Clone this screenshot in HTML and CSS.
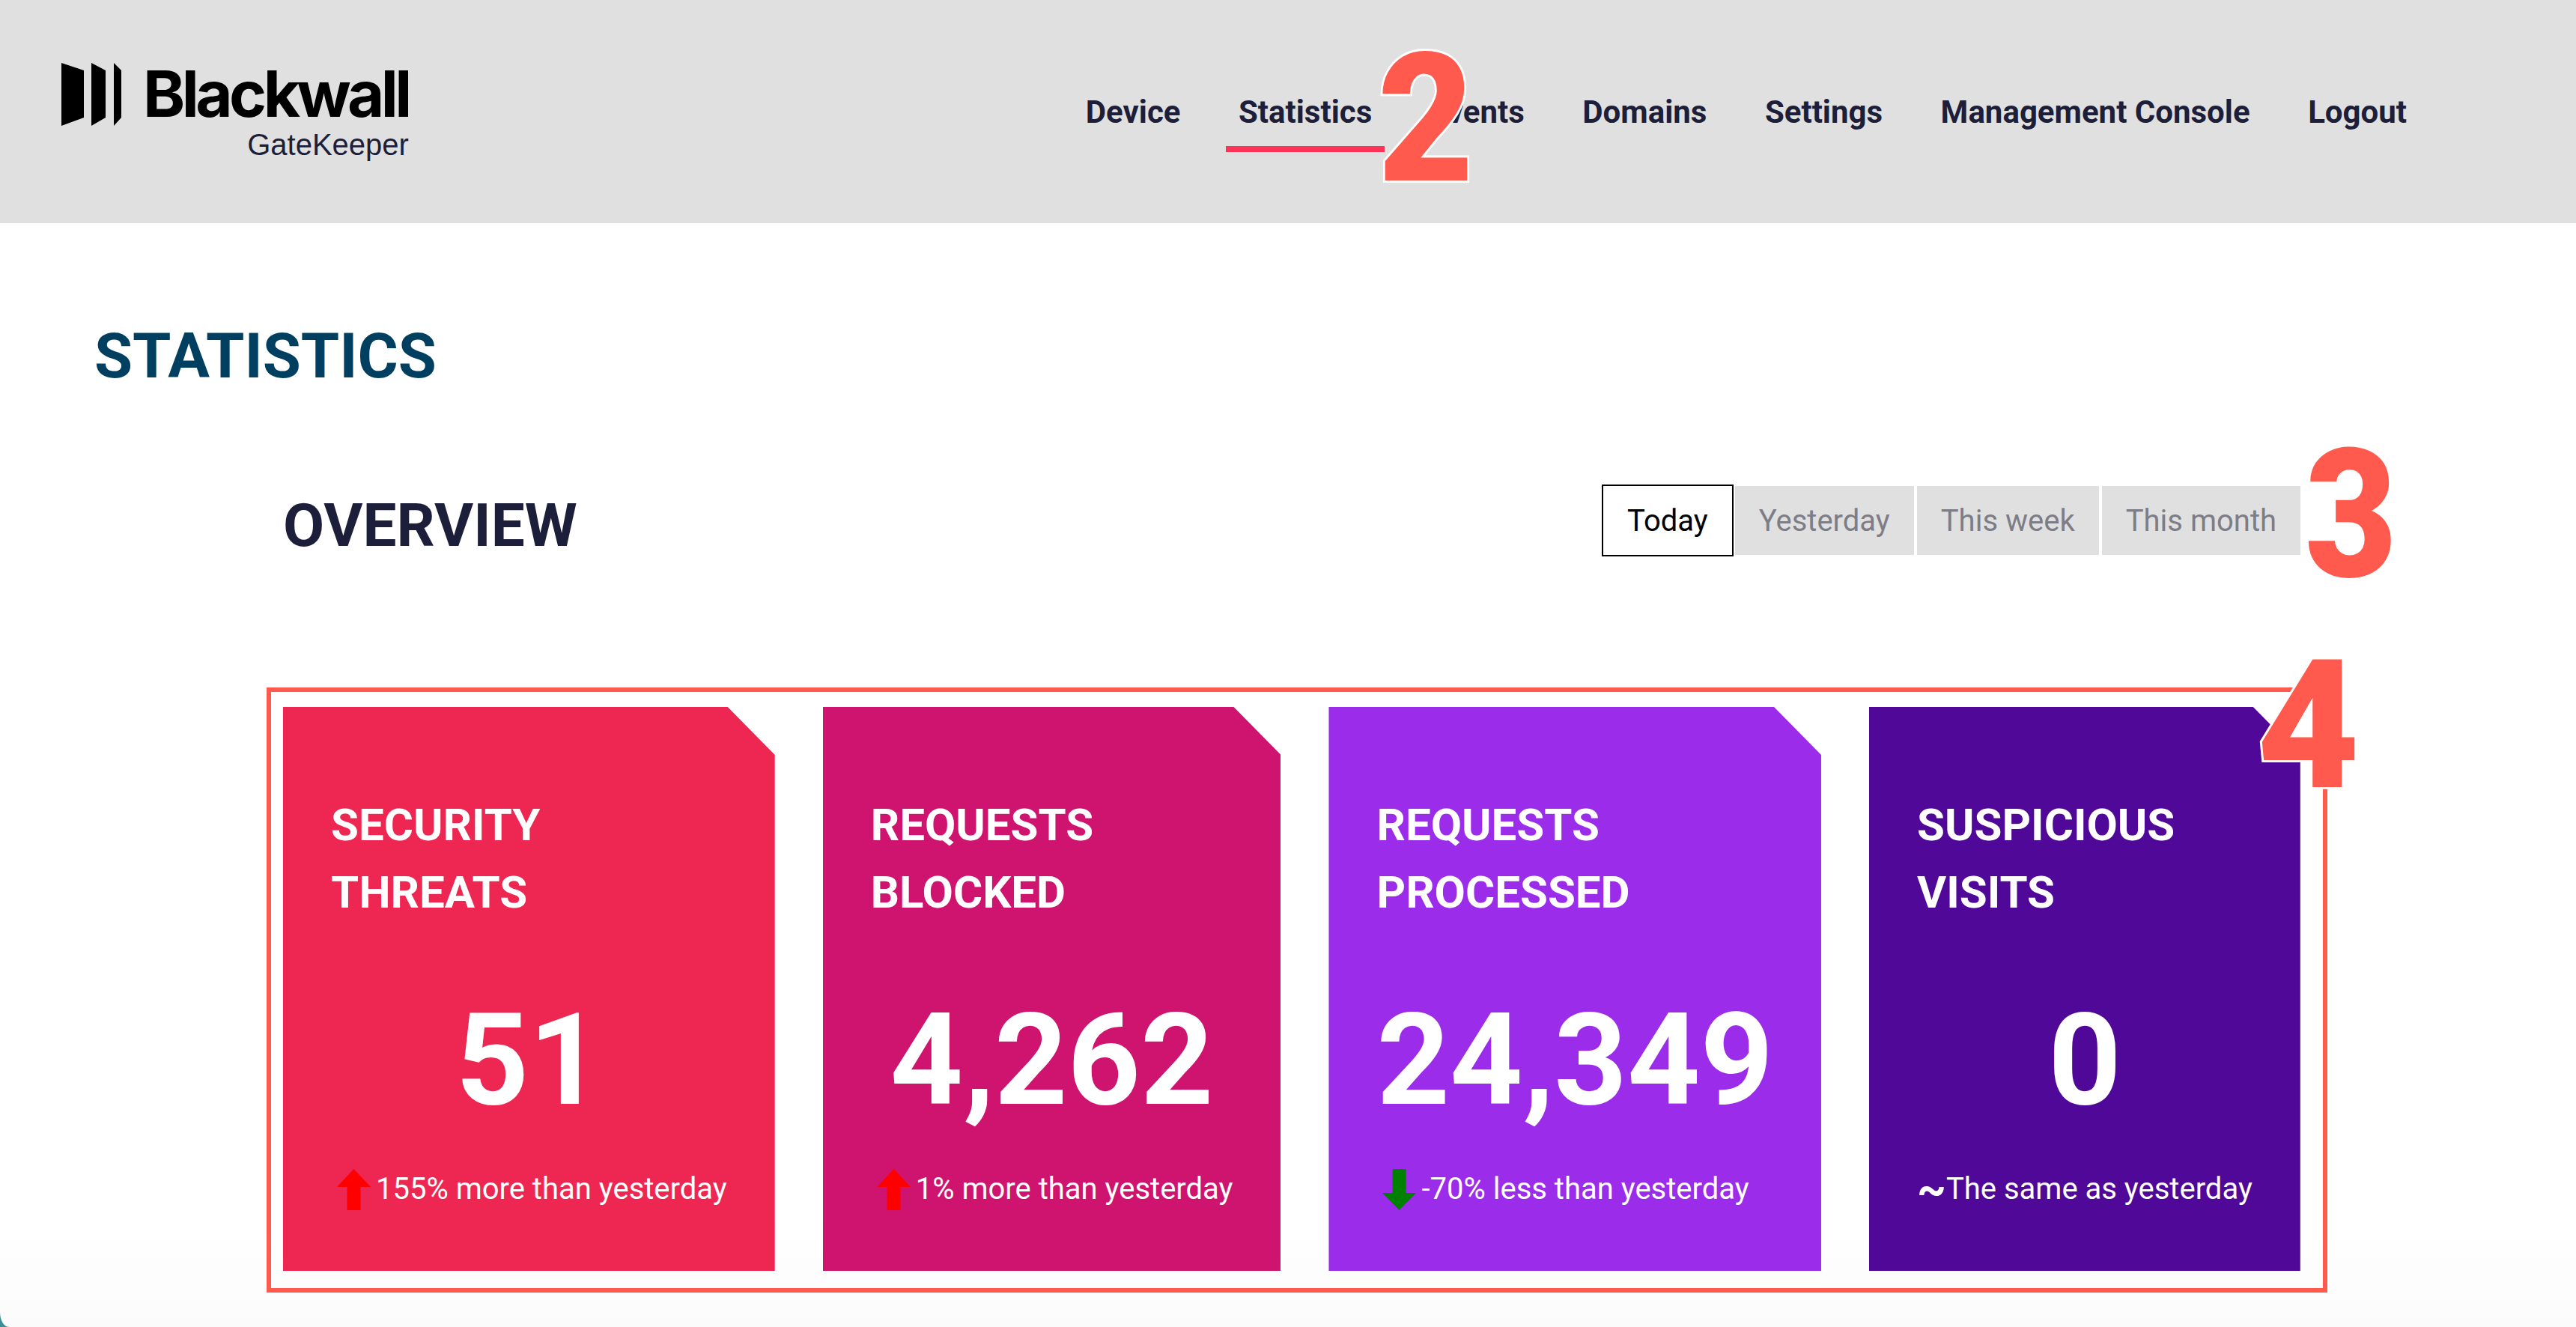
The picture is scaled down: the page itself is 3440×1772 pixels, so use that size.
FILE: index.html
```html
<!DOCTYPE html>
<html lang="en">
<head>
<meta charset="utf-8">
<title>Blackwall GateKeeper - Statistics</title>
<link rel="stylesheet" href="styles.css">
</head>
<body>
<div class="page">
  <header class="topbar">
    <div class="brand">
      <svg class="brand-mark" viewBox="0 0 80 84" aria-hidden="true">
        <path d="M0 0 L30 10 V73 L0 84 Z"/>
        <path d="M40 0 L59 10 V73 L40 84 Z"/>
        <path d="M70 0 L80 10 V73 L70 84 Z"/>
      </svg>
      <div class="brand-text">
        <div class="brand-name">Blackwall</div>
        <div class="brand-sub">GateKeeper</div>
      </div>
    </div>
    <nav class="nav">
      <a class="nav-item">Device</a>
      <a class="nav-item nav-item-active">Statistics</a>
      <a class="nav-item">Events</a>
      <a class="nav-item">Domains</a>
      <a class="nav-item">Settings</a>
      <a class="nav-item">Management Console</a>
      <a class="nav-item">Logout</a>
    </nav>
  </header>
  <main class="content">
    <h1 class="page-title">STATISTICS</h1>
    <section class="overview">
      <div class="overview-head">
        <h2 class="overview-title">OVERVIEW</h2>
        <div class="tabs">
          <button class="tab tab-active">Today</button>
          <button class="tab">Yesterday</button>
          <button class="tab">This week</button>
          <button class="tab">This month</button>
        </div>
      </div>
      <div class="cards">
        <article class="card card-threats">
          <h3 class="card-title">SECURITY<br>THREATS</h3>
          <div class="card-value">51</div>
          <div class="card-note">
            <svg class="trend" viewBox="0 0 45 55" aria-hidden="true"><path class="trend-up" d="M22.5 0 L45 24 H31.5 V55 H13.5 V24 H0 Z"/></svg>
            <span>155% more than yesterday</span>
          </div>
        </article>
        <article class="card card-blocked">
          <h3 class="card-title">REQUESTS<br>BLOCKED</h3>
          <div class="card-value">4,262</div>
          <div class="card-note">
            <svg class="trend" viewBox="0 0 45 55" aria-hidden="true"><path class="trend-up" d="M22.5 0 L45 24 H31.5 V55 H13.5 V24 H0 Z"/></svg>
            <span>1% more than yesterday</span>
          </div>
        </article>
        <article class="card card-processed">
          <h3 class="card-title">REQUESTS<br>PROCESSED</h3>
          <div class="card-value">24,349</div>
          <div class="card-note">
            <svg class="trend" viewBox="0 0 45 55" aria-hidden="true"><path class="trend-down" d="M13.5 0 H31.5 V32 H45 L22.5 55 L0 32 H13.5 Z"/></svg>
            <span>-70% less than yesterday</span>
          </div>
        </article>
        <article class="card card-visits">
          <h3 class="card-title">SUSPICIOUS<br>VISITS</h3>
          <div class="card-value">0</div>
          <div class="card-note">
            <span class="trend-same">~</span>
            <span>The same as yesterday</span>
          </div>
        </article>
      </div>
    </section>
  </main>
  <span class="marker marker-2">2</span>
  <span class="marker marker-3">3</span>
  <span class="marker marker-4">4</span>
</div>
</body>
</html>
```
FILE: styles.css
```css
* { box-sizing: border-box; }
html, body { margin: 0; height: 100%; }
body {
  background: #3a8f94;
  font-family: Roboto, "Liberation Sans", sans-serif;
  color: #1d1f3a;
  overflow: hidden;
}
.page {
  position: relative;
  width: 3440px;
  height: 1772px;
  display: flex;
  flex-direction: column;
  background: linear-gradient(#ffffff 92%, #fbfbfb 100%);
  border-bottom-left-radius: 12px 20px;
  overflow: hidden;
}

/* Top bar */
.topbar {
  flex: 0 0 298px;
  display: flex;
  align-items: flex-start;
  justify-content: space-between;
  background: #e0e0e0;
  padding: 84px 209px 0 82px;
}
.brand { display: flex; gap: 29px; }
.brand-mark { width: 80px; height: 84px; fill: #000; display: block; }
.brand-text { display: flex; flex-direction: column; align-items: flex-end; }
.brand-name {
  font-family: Inter, Roboto, sans-serif;
  font-weight: 700;
  font-size: 85px;
  line-height: 84px;
  letter-spacing: -4.5px;
  color: #000;
}
.brand-sub {
  font-family: "Liberation Sans", Arial, sans-serif;
  font-size: 40px;
  line-height: 44px;
  color: #1d1f3a;
  margin-top: 3px;
}
.nav { display: flex; gap: 43.5px; margin-top: 41px; }
.nav-item {
  display: block;
  height: 78px;
  padding: 2px 17px 0;
  font-size: 42px;
  font-weight: 700;
  line-height: 46px;
  color: #1d1f3a;
  white-space: nowrap;
  border-bottom: 8px solid transparent;
}
.nav-item-active { border-bottom-color: #ff3358; }

/* Content */
.content { flex: 1; padding: 0 332px 0 126px; }
.page-title {
  margin: 132px 0 0;
  font-size: 83px;
  line-height: 92px;
  font-weight: 700;
  color: #003f5f;
}
.overview { padding-left: 230px; }
.overview-head {
  display: flex;
  align-items: flex-start;
  justify-content: space-between;
  margin-top: 125px;
  padding: 0 36px 0 22px;
}
.overview-title {
  margin: 0;
  padding-top: 7px;
  font-size: 80px;
  line-height: 96px;
  font-weight: 700;
  color: #1d1f3a;
}
.tabs { display: flex; align-items: center; gap: 4px; }
.tab {
  height: 92px;
  padding: 0 32px;
  border: 0;
  background: #e0e0e0;
  color: #7d7d87;
  font-family: Roboto, sans-serif;
  font-size: 40px;
  white-space: nowrap;
}
.tab-active {
  height: 96px;
  padding: 0 32px;
  background: #fff;
  color: #000;
  border: 2px solid #000;
  margin-right: -2px;
}

/* Cards, wrapped in the red annotation frame */
.cards {
  display: flex;
  gap: 64px;
  width: 2752px;
  margin-top: 168px;
  padding: 20px 29px 23px 16px;
  border: 6px solid #ff5a4d;
}
.card {
  height: 753px;
  padding: 113px 64px 0;
  color: #fff;
  clip-path: polygon(0 0, calc(100% - 63px) 0, 100% 64px, 100% 100%, 0 100%);
  white-space: nowrap;
}
.card-threats { background: #ed2751; }
.card-blocked { background: #cf1470; }
.card-processed { background: #9b2cea; }
.card-visits { background: #4f0897; }
.card-title {
  margin: 0;
  font-size: 60px;
  line-height: 90px;
  font-weight: 700;
}
.card-value {
  margin-top: 79px;
  text-align: center;
  font-size: 170px;
  line-height: 200px;
  font-weight: 700;
}
.card-note {
  display: flex;
  align-items: center;
  margin-top: 44px;
  height: 56px;
  font-size: 40px;
  line-height: 56px;
}
.trend { width: 45px; height: 55px; margin: 0 7px 0 8px; flex: none; }
.trend-up { fill: #ff0000; }
.trend-down { fill: #008000; }
.trend-same { font-weight: 700; font-size: 60px; line-height: 56px; }

/* Numbered annotation digits that sit over the page */
.marker {
  position: absolute;
  font-family: Roboto, sans-serif;
  font-weight: 900;
  font-size: 240px;
  line-height: 240px;
  color: #ff5a4d;
  -webkit-text-stroke: 6px #fff;
  paint-order: stroke fill;
  transform-origin: left top;
}
.marker-2 { left: 1840px; top: 39px; transform: scaleX(0.92); }
.marker-3 { left: 3078px; top: 568px; transform: scaleX(0.885); }
.marker-4 { left: 3014px; top: 849px; transform: scaleX(0.985); }
```
